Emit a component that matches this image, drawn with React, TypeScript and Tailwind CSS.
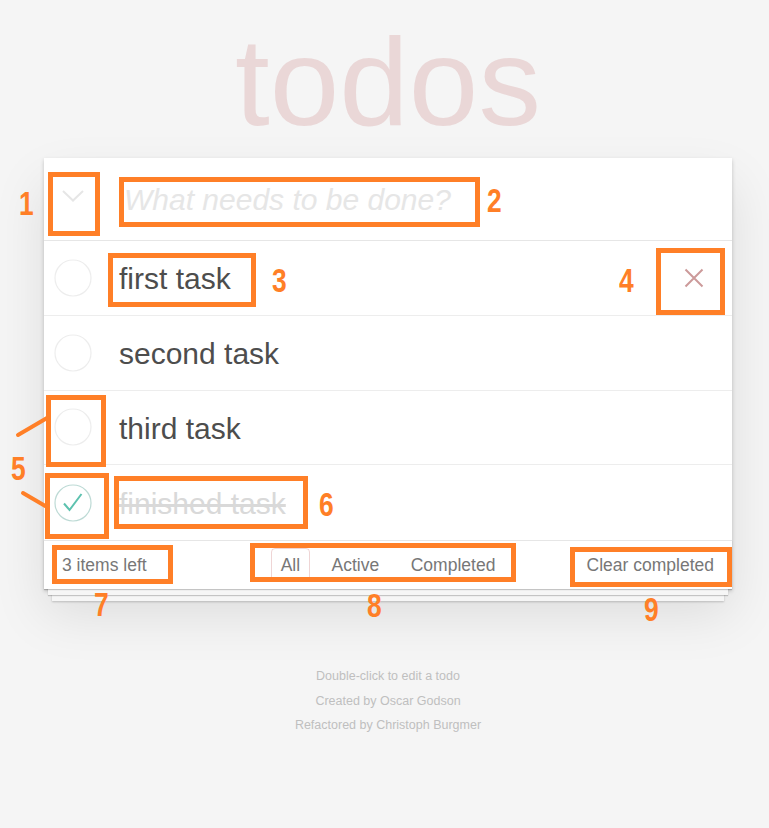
import type { ReactNode } from 'react';

interface Todo {
  title: string;
  done: boolean;
}

const todos: Todo[] = [
  { title: 'first task', done: false },
  { title: 'second task', done: false },
  { title: 'third task', done: false },
  { title: 'finished task', done: true },
];

function Toggle({ done }: { done: boolean }) {
  return (
    <svg viewBox="0 0 40 40" className="h-10 w-10 shrink-0">
      <circle
        cx="20"
        cy="20"
        r="18"
        fill="none"
        stroke={done ? '#bddad5' : '#ededed'}
        strokeWidth="1.2"
      />
      {done ? (
        <polyline
          points="11,20.5 16.5,27 28.5,11"
          fill="none"
          stroke="#5dc2af"
          strokeWidth="2"
        />
      ) : null}
    </svg>
  );
}

function TodoRow({ todo, first, last }: { todo: Todo; first: boolean; last: boolean }) {
  return (
    <li className={`flex h-[74.75px] items-center pl-[9px] ${last ? '' : 'border-b border-[#ededed]'}`}>
      <Toggle done={todo.done} />
      <span
        className={`ml-[26px] mt-[2px] text-[30px] ${
          todo.done ? 'text-[#d9d9d9] line-through' : 'text-[#4d4d4d]'
        }`}
      >
        {todo.title}
      </span>
      {first ? (
        <svg viewBox="0 0 20 20" className="ml-auto mr-[28px] h-5 w-5">
          <path d="M1.5 1.5 18.5 18.5M18.5 1.5 1.5 18.5" stroke="#cc9a9a" strokeWidth="2" />
        </svg>
      ) : null}
    </li>
  );
}

// orange callouts drawn over the screenshot
function Mark({ className }: { className: string }) {
  return <div className={`pointer-events-none absolute border-[5px] border-[#ff7f27] ${className}`} />;
}

function Num({ className, children }: { className: string; children: ReactNode }) {
  return (
    <span
      className={`pointer-events-none absolute origin-top-left scale-x-[0.8] font-['Liberation_Sans',sans-serif] text-[33px] font-bold leading-none text-[#ff7f27] ${className}`}
    >
      {children}
    </span>
  );
}

export default function App() {
  return (
    <div className="relative min-h-screen bg-[#f5f5f5] font-['Liberation_Sans',Arial,sans-serif]">
      <div className="ml-[44px] w-[688px]">
        <h1 className="h-[158px] pt-[19px] text-center text-[125px] font-normal leading-none text-[rgba(175,47,47,0.15)]">
          todos
        </h1>

        <section className="bg-white shadow-[0_2px_4px_0_rgba(0,0,0,0.2),0_25px_50px_0_rgba(0,0,0,0.1)]">
          <header className="flex h-[83px] items-center border-b border-[#e6e6e6]">
            <svg viewBox="0 0 22 12" className="ml-[18px] mt-[-6px] h-3 w-[22px]">
              <polyline points="1,1 11,10.5 21,1" fill="none" stroke="#e6e6e6" strokeWidth="2" />
            </svg>
            <span className="ml-[40px] mt-[1px] text-[30px] italic text-[#e6e6e6]">What needs to be done?</span>
          </header>

          <ul>
            {todos.map((todo, i) => (
              <TodoRow key={todo.title} todo={todo} first={i === 0} last={i === todos.length - 1} />
            ))}
          </ul>

          <footer className="grid h-[49px] grid-cols-[1fr_auto_1fr] items-center border-t border-[#e6e6e6] px-[18px] text-[17.5px] text-[#777] shadow-[0_1px_1px_rgba(0,0,0,0.2),0_10px_0_-4px_#f6f6f6,0_11px_1px_-4px_rgba(0,0,0,0.2),0_20px_0_-8px_#f6f6f6,0_21px_2px_-8px_rgba(0,0,0,0.2)]">
            <span className="justify-self-start">3 items left</span>
            <div className="flex items-center gap-[12.5px]">
              <span className="rounded-[4px] border border-[rgba(175,47,47,0.2)] px-[8.5px] py-[3px]">All</span>
              <span className="px-[9.5px] py-[4px]">Active</span>
              <span className="px-[9.5px] py-[4px]">Completed</span>
            </div>
            <span className="justify-self-end">Clear completed</span>
          </footer>
        </section>

        <div className="mt-[75px] text-center text-[12.5px] leading-[24.6px] text-[#bfbfbf]">
          <p>Double-click to edit a todo</p>
          <p>Created by Oscar Godson</p>
          <p>Refactored by Christoph Burgmer</p>
        </div>
      </div>

      <Mark className="left-[48px] top-[172px] h-[64px] w-[52px]" />
      <Mark className="left-[119px] top-[177px] h-[50px] w-[361px]" />
      <Mark className="left-[108px] top-[253px] h-[54px] w-[148px]" />
      <Mark className="left-[656px] top-[248px] h-[67px] w-[69px]" />
      <Mark className="left-[46px] top-[395px] h-[72px] w-[60px]" />
      <Mark className="left-[45px] top-[473px] h-[66px] w-[64px]" />
      <Mark className="left-[114px] top-[476px] h-[53px] w-[194px]" />
      <Mark className="left-[52px] top-[545px] h-[39px] w-[121px]" />
      <Mark className="left-[250px] top-[543px] h-[39px] w-[266px]" />
      <Mark className="left-[570px] top-[547px] h-[40px] w-[162px]" />

      <svg className="pointer-events-none absolute left-0 top-[410px] h-[110px] w-[60px]" viewBox="0 0 60 110">
        <path d="M18 25 47 8M23 83 47 97" stroke="#ff7f27" strokeWidth="4" strokeLinecap="round" />
      </svg>

      <Num className="left-[19px] top-[187px]">1</Num>
      <Num className="left-[487px] top-[184px]">2</Num>
      <Num className="left-[272px] top-[264px]">3</Num>
      <Num className="left-[619px] top-[264px]">4</Num>
      <Num className="left-[11px] top-[452px]">5</Num>
      <Num className="left-[319px] top-[488px]">6</Num>
      <Num className="left-[94px] top-[588px]">7</Num>
      <Num className="left-[367px] top-[589px]">8</Num>
      <Num className="left-[644px] top-[593px]">9</Num>
    </div>
  );
}
